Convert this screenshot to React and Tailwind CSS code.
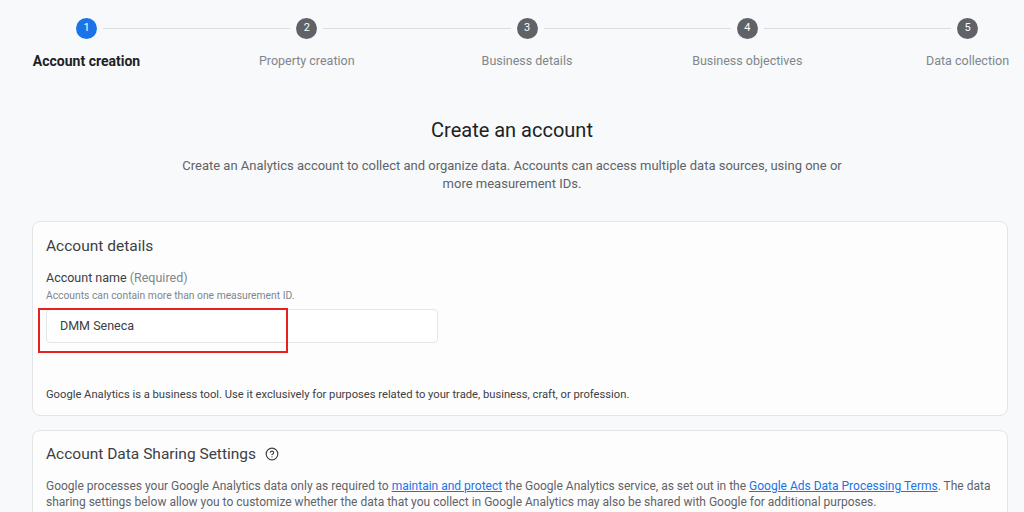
import { CircleHelp } from 'lucide-react';

const steps = [
  { n: 1, label: 'Account creation', active: true },
  { n: 2, label: 'Property creation' },
  { n: 3, label: 'Business details' },
  { n: 4, label: 'Business objectives' },
  { n: 5, label: 'Data collection' },
];

const Stepper = () => (
  <div className="flex items-start pl-[76px] pr-[46px] pt-[18px]">
    {steps.map((s, i) => (
      <div key={s.n} className="contents">
        <div className="flex flex-col items-center w-[21px] shrink-0">
          <div
            className={
              s.active
                ? 'w-[21px] h-[21px] rounded-full bg-[#1a73e8] text-white text-[11px] flex items-center justify-center'
                : 'w-[21px] h-[21px] rounded-full bg-[#5f6368] text-white text-[11px] flex items-center justify-center'
            }
          >
            {s.n}
          </div>
          <div
            className={
              s.active
                ? 'mt-[12px] whitespace-nowrap text-[14px] leading-[20px] font-bold text-[#202124]'
                : 'mt-[13px] whitespace-nowrap text-[12.5px] leading-[18px] text-[#80868b]'
            }
          >
            {s.label}
          </div>
        </div>
        {i < steps.length - 1 && <div className="flex-1 h-px bg-[#dadce0] mt-[10px] mx-[6px]" />}
      </div>
    ))}
  </div>
);

const App = () => {
  return (
    <div className="w-[1024px] h-[512px] overflow-hidden bg-[#f7f9fa] font-['Roboto',sans-serif] text-[#3c4043]">
      <Stepper />

      <div className="flex flex-col items-center mt-[46px]">
        <h1 className="text-[20px] text-[#202124] leading-[26px]">Create an account</h1>
        <p className="mt-[14px] w-[670px] text-center text-[13px] leading-[18px] text-[#5f6368]">
          Create an Analytics account to collect and organize data. Accounts can access multiple data sources, using one or more measurement IDs.
        </p>
      </div>

      <div className="ml-[32px] mr-[16px] mt-[28px] flex flex-col gap-[14px]">
        {/* Account details */}
        <div className="bg-white/70 border border-[#e3e6e8] rounded-[8px] px-[13px] pt-[14px] pb-[13px]">
          <h2 className="text-[15.5px] text-[#3c4043] leading-[20px]">Account details</h2>
          <div className="mt-[14px] text-[12.5px] leading-[16px] text-[#3c4043]">
            Account name <span className="text-[#80868b]">(Required)</span>
          </div>
          <div className="mt-[3px] text-[10.3px] leading-[14px] text-[#80868b]">
            Accounts can contain more than one measurement ID.
          </div>
          <div className="relative mt-[6px]">
            <div className="w-[392px] h-[34px] border border-[#e3e6e8] rounded-[4px] bg-white flex items-center px-[13px] text-[12.5px] text-[#3c4043]">
              DMM Seneca
            </div>
            <div className="absolute left-[-8px] top-[-1px] w-[250px] h-[45px] border-2 border-[#e5221f]" />
          </div>
          <p className="mt-[45px] text-[11.2px] leading-[14px] text-[#3c4043]">
            Google Analytics is a business tool. Use it exclusively for purposes related to your trade, business, craft, or profession.
          </p>
        </div>

        {/* Data sharing */}
        <div className="bg-white/70 border border-[#e3e6e8] rounded-[8px] px-[13px] pt-[13px] pb-[14px]">
          <h2 className="flex items-center gap-[9px] text-[15.5px] text-[#3c4043] leading-[20px]">
            Account Data Sharing Settings
            <CircleHelp size={14} strokeWidth={2} className="text-[#3c4043]" />
          </h2>
          <p className="mt-[14px] text-[12px] leading-[16px] text-[#5f6368]">
            Google processes your Google Analytics data only as required to{' '}
            <a className="text-[#1a73e8] underline">maintain and protect</a> the Google Analytics service, as set out in the{' '}
            <a className="text-[#1a73e8] underline">Google Ads Data Processing Terms</a>. The data sharing settings below allow you to customize whether the data that you collect in Google Analytics may also be shared with Google for additional purposes.
          </p>
        </div>
      </div>
    </div>
  );
};

export default App;
